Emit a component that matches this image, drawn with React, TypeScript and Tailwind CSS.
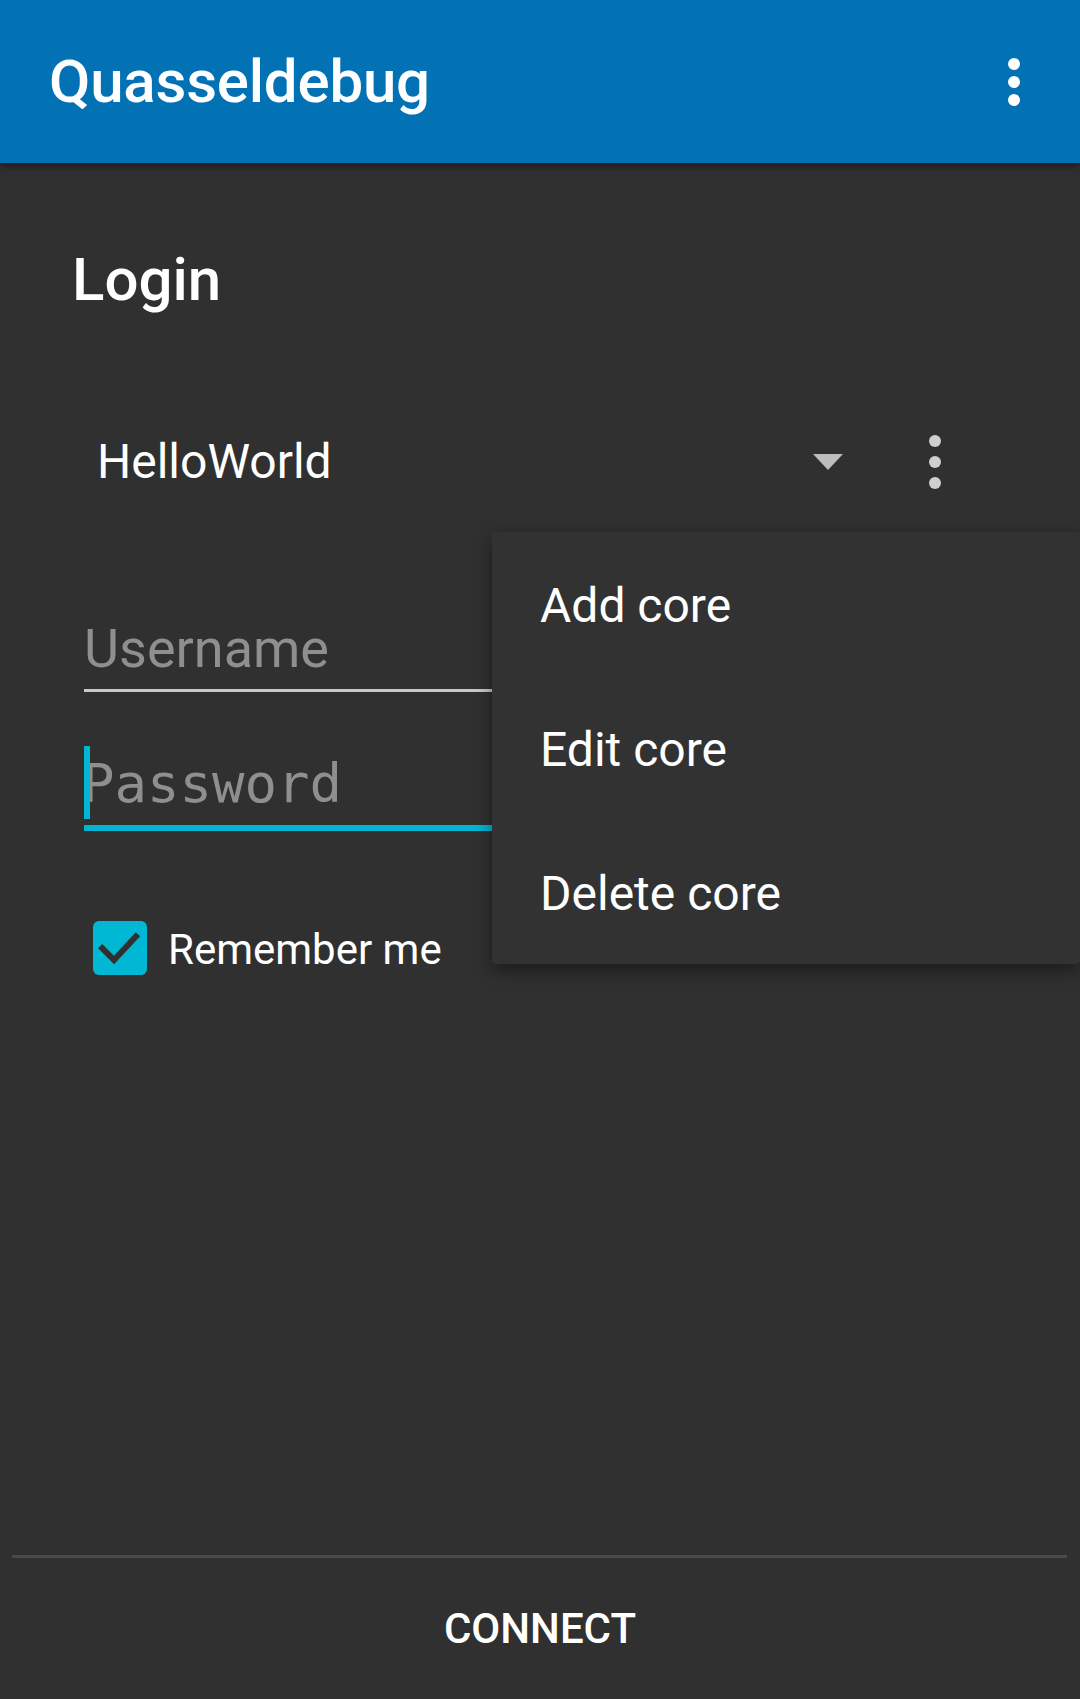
import React from 'react';

const roboto = { fontFamily: 'Roboto, "Liberation Sans", sans-serif' };

function Dots({ color, size, gap }: { color: string; size: string; gap: string }) {
  return (
    <div className={`flex flex-col ${gap}`}>
      <span className={`${size} rounded-full ${color}`} />
      <span className={`${size} rounded-full ${color}`} />
      <span className={`${size} rounded-full ${color}`} />
    </div>
  );
}

export default function App() {
  return (
    <div
      className="relative flex h-[1699px] w-[1080px] flex-col overflow-hidden bg-[#303030] text-white"
      style={roboto}
    >
      {/* Toolbar */}
      <header className="relative z-10 flex h-[163px] shrink-0 items-center justify-between bg-[#0272b5] pl-[49px] pr-[1px] shadow-[0_3px_8px_rgba(0,0,0,0.45)]">
        <h1 className="text-[60px] font-medium leading-[60px] tracking-[-0.2px]">Quasseldebug</h1>
        <button className="mr-[59px] p-0">
          <Dots color="bg-white" size="w-[12px] h-[12px]" gap="gap-[6px]" />
        </button>
      </header>

      {/* Login form */}
      <main className="flex flex-1 flex-col">
        <h2 className="ml-[72px] mt-[87px] text-[60px] font-medium leading-[60px]">Login</h2>

        <div className="mt-[80px] flex h-[144px] items-center">
          <span className="ml-[97px] flex-1 text-[48px] leading-[48px]">HelloWorld</span>
          <svg width="30" height="16" viewBox="0 0 30 16" className="shrink-0">
            <polygon points="0,0 30,0 15,16" fill="#bdbdbd" />
          </svg>
          <div className="ml-[86px] mr-[139px]">
            <Dots color="bg-[#cfcfcf]" size="w-[12px] h-[12px]" gap="gap-[9px]" />
          </div>
        </div>

        <div className="ml-[84px] mr-[84px] mt-[88px]">
          <div className="text-[54px] leading-[54px] text-[#8f8f8f]">Username</div>
          <div className="mt-[13px] h-[3px] bg-[#c8c8c8]" />
        </div>

        <div className="relative ml-[84px] mr-[84px] mt-[65px]">
          <div
            className="-ml-[2px] text-[54px] leading-[54px] text-[#8f8f8f]"
            style={{ fontFamily: '"DejaVu Sans Mono", "Liberation Mono", monospace' }}
          >
            Password
          </div>
          <span className="absolute left-0 top-[-11px] h-[73px] w-[6px] bg-[#00b6d4]" />
          <div className="mt-[14px] h-[6px] bg-[#00b6d4]" />
        </div>

        <label className="ml-[93px] mt-[90px] flex h-[54px] items-center">
          <span className="flex h-[54px] w-[54px] items-center justify-center rounded-[6px] bg-[#00b8d4]">
            <svg width="54" height="54" viewBox="0 0 18 18">
              <polyline points="2.4,8.4 7,13 15,4.4" fill="none" stroke="#303030" strokeWidth="2" />
            </svg>
          </span>
          <span className="ml-[21px] mt-[3px] text-[42px] leading-[42px]">Remember me</span>
        </label>
      </main>

      {/* Footer */}
      <footer className="shrink-0">
        <div className="ml-[12px] mr-[13px] h-[3px] bg-[#4a4a4a]" />
        <button className="flex h-[141px] w-full items-center justify-center text-[42px] font-medium leading-[42px] text-white">
          CONNECT
        </button>
      </footer>

      {/* Overflow menu */}
      <div className="absolute left-[492px] top-[532px] z-20 w-[588px] rounded-[4px] bg-[#323232] shadow-[0_6px_18px_rgba(0,0,0,0.45)]">
        {['Add core', 'Edit core', 'Delete core'].map((item) => (
          <div key={item} className="flex h-[144px] items-center pl-[48px] pt-[3px] text-[48px] leading-[48px]">
            {item}
          </div>
        ))}
      </div>
    </div>
  );
}
